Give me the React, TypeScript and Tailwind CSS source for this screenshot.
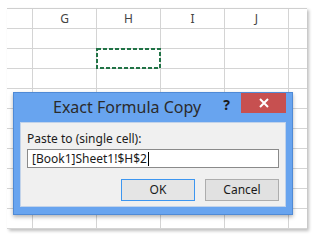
const cols = ["", "G", "H", "I", "J", ""];
const widths = ["w-[26px]", "w-[64px]", "w-[64px]", "w-[64px]", "w-[64px]", "w-[18px]"];
const rows = Array.from({ length: 10 }, (_, i) => i);

function SelectionMarquee() {
  return (
    <svg
      className="absolute left-[-1px] top-[-1px]"
      width="66"
      height="22"
      viewBox="0 0 66 22"
    >
      <rect
        x="1"
        y="1"
        width="63"
        height="19"
        fill="none"
        stroke="#217346"
        strokeWidth="2"
        strokeDasharray="4 2"
      />
    </svg>
  );
}

function Sheet() {
  return (
    <div className="ml-[7px] mt-[8px] w-[300px] border-t border-[#cfcfcf] bg-white shadow-[2px_2px_3px_rgba(0,0,0,0.25)]">
      <div className="flex h-[20px]">
        {cols.map((c, i) => (
          <div
            key={i}
            className={`${widths[i]} flex items-center justify-center border-b border-r border-[#d4d4d4] text-[12px] text-[#444] last:border-r-0`}
          >
            {c}
          </div>
        ))}
      </div>
      {rows.map((r) => (
        <div key={r} className="flex h-[20px]">
          {cols.map((_, i) => (
            <div
              key={i}
              className={`${widths[i]} relative border-b border-r border-[#d4d4d4] last:border-r-0`}
            >
              {r === 1 && i === 2 && <SelectionMarquee />}
            </div>
          ))}
        </div>
      ))}
    </div>
  );
}

function Dialog() {
  return (
    <div className="absolute left-[13px] top-[92px] h-[123px] w-[280px] border border-[#4f8ad6] bg-[#68a4ef] shadow-[0_2px_4px_rgba(0,0,0,0.3)]">
      <div className="flex h-[29px] items-start pl-[39px] pr-[6px]">
        <span className="pt-[4px] text-[16px] leading-[20px] text-[#2b2b2b]">
          Exact Formula Copy
        </span>
        <span className="ml-auto mr-[11px] pt-[3px] text-[14px] font-bold leading-[18px] text-[#1a1a1a]">
          ?
        </span>
        <div className="flex h-[20px] w-[45px] items-center justify-center bg-[#c75050]">
          <svg width="10" height="10" viewBox="0 0 10 10">
            <path d="M1 1 L9 9 M9 1 L1 9" stroke="#fff" strokeWidth="2" />
          </svg>
        </div>
      </div>
      <div className="mx-[6px] h-[85px] border border-[#c2d3ea] bg-[#f0f0f0] px-[6px] pt-[8px]">
        <div className="text-[12px] leading-[15px] text-[#1a1a1a]">Paste to (single cell):</div>
        <div className="mt-[3px] flex h-[19px] w-[252px] items-center border border-[#8a8a8a] bg-white pl-[4px] text-[12px] text-[#1a1a1a]">
          [Book1]Sheet1!$H$2
          <span className="ml-[1px] h-[14px] w-px bg-black" />
        </div>
        <div className="mt-[11px] flex justify-end gap-[10px]">
          <div className="flex h-[22px] w-[74px] items-center justify-center border border-[#3d96f0] bg-[#e5e5e5] text-[12px] text-[#1a1a1a]">
            OK
          </div>
          <div className="flex h-[22px] w-[74px] items-center justify-center border border-[#adadad] bg-[#e1e1e1] text-[12px] text-[#1a1a1a]">
            Cancel
          </div>
        </div>
      </div>
    </div>
  );
}

export default function App() {
  return (
    <div
      className="relative h-[240px] w-[315px] overflow-hidden bg-white"
      style={{ fontFamily: '"Noto Sans", "Open Sans", sans-serif' }}
    >
      <Sheet />
      <Dialog />
    </div>
  );
}
